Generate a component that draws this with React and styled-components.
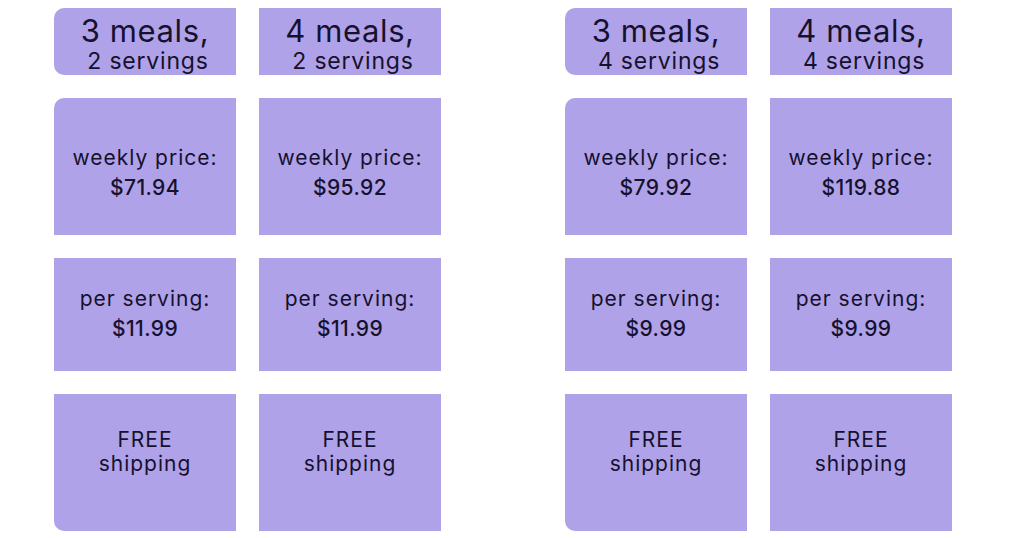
import React from 'react';
import styled, { createGlobalStyle } from 'styled-components';

const GlobalStyle = createGlobalStyle`
  html, body {
    margin: 0;
    padding: 0;
    background: #ffffff;
  }
  body {
    font-family: Inter, "Liberation Sans", sans-serif;
    color: #15112e;
  }
`;

const Page = styled.main`
  display: flex;
  gap: 124px;
  padding: 8px 0 0 54px;
  width: 1024px;
  height: 538px;
  box-sizing: border-box;
`;

const Plan = styled.section`
  display: grid;
  grid-template-columns: 182px 182px;
  grid-template-rows: 67px 137px 113px 137px;
  column-gap: 23px;
  row-gap: 23px;
  grid-auto-flow: column;
`;

const Cell = styled.div`
  background: #b0a2e8;
  display: flex;
  flex-direction: column;
  align-items: center;
  justify-content: center;
  text-align: center;
  box-sizing: border-box;
  padding-top: ${(p) => Math.max(p.$shift || 0, 0) * 2}px;
  padding-bottom: ${(p) => Math.max(-(p.$shift || 0), 0) * 2}px;
  border-radius: ${(p) => p.$radius || '0'};
`;

const Title = styled.div`
  font-size: 31px;
  line-height: 34px;
  letter-spacing: 0.6px;
`;

const Sub = styled.div`
  font-size: 23px;
  line-height: 26px;
  letter-spacing: 0.8px;
  padding-left: ${(p) => p.$indent || 0}px;
`;

const Label = styled.div`
  font-size: 21px;
  line-height: 30px;
  letter-spacing: 1px;
`;

const Price = styled.div`
  font-size: 21px;
  line-height: 30px;
  font-weight: 500;
  letter-spacing: 0.4px;
`;

const Shipping = styled.div`
  font-size: 21px;
  line-height: 24px;
  letter-spacing: 1px;
`;

const plans = [
  [
    { meals: 3, servings: 2, weekly: '$71.94', per: '$11.99' },
    { meals: 4, servings: 2, weekly: '$95.92', per: '$11.99' },
  ],
  [
    { meals: 3, servings: 4, weekly: '$79.92', per: '$9.99' },
    { meals: 4, servings: 4, weekly: '$119.88', per: '$9.99' },
  ],
];

function Column({ plan, first }) {
  const r = (corners) => (first ? corners : '0');
  return (
    <>
      <Cell $radius={r('10px 0 0 10px')} $shift={2}>
        <Title>{plan.meals} meals,</Title>
        <Sub $indent={6}>{plan.servings} servings</Sub>
      </Cell>
      <Cell $radius={r('10px 0 0 0')} $shift={6}>
        <Label>weekly price:</Label>
        <Price>{plan.weekly}</Price>
      </Cell>
      <Cell $shift={-1}>
        <Label>per serving:</Label>
        <Price>{plan.per}</Price>
      </Cell>
      <Cell $radius={r('0 0 0 10px')} $shift={-11}>
        <Shipping>FREE</Shipping>
        <Shipping>shipping</Shipping>
      </Cell>
    </>
  );
}

export default function App() {
  return (
    <>
      <GlobalStyle />
      <Page>
        {plans.map((group, i) => (
          <Plan key={i}>
            {group.map((plan, j) => (
              <Column key={j} plan={plan} first={j === 0} />
            ))}
          </Plan>
        ))}
      </Page>
    </>
  );
}
